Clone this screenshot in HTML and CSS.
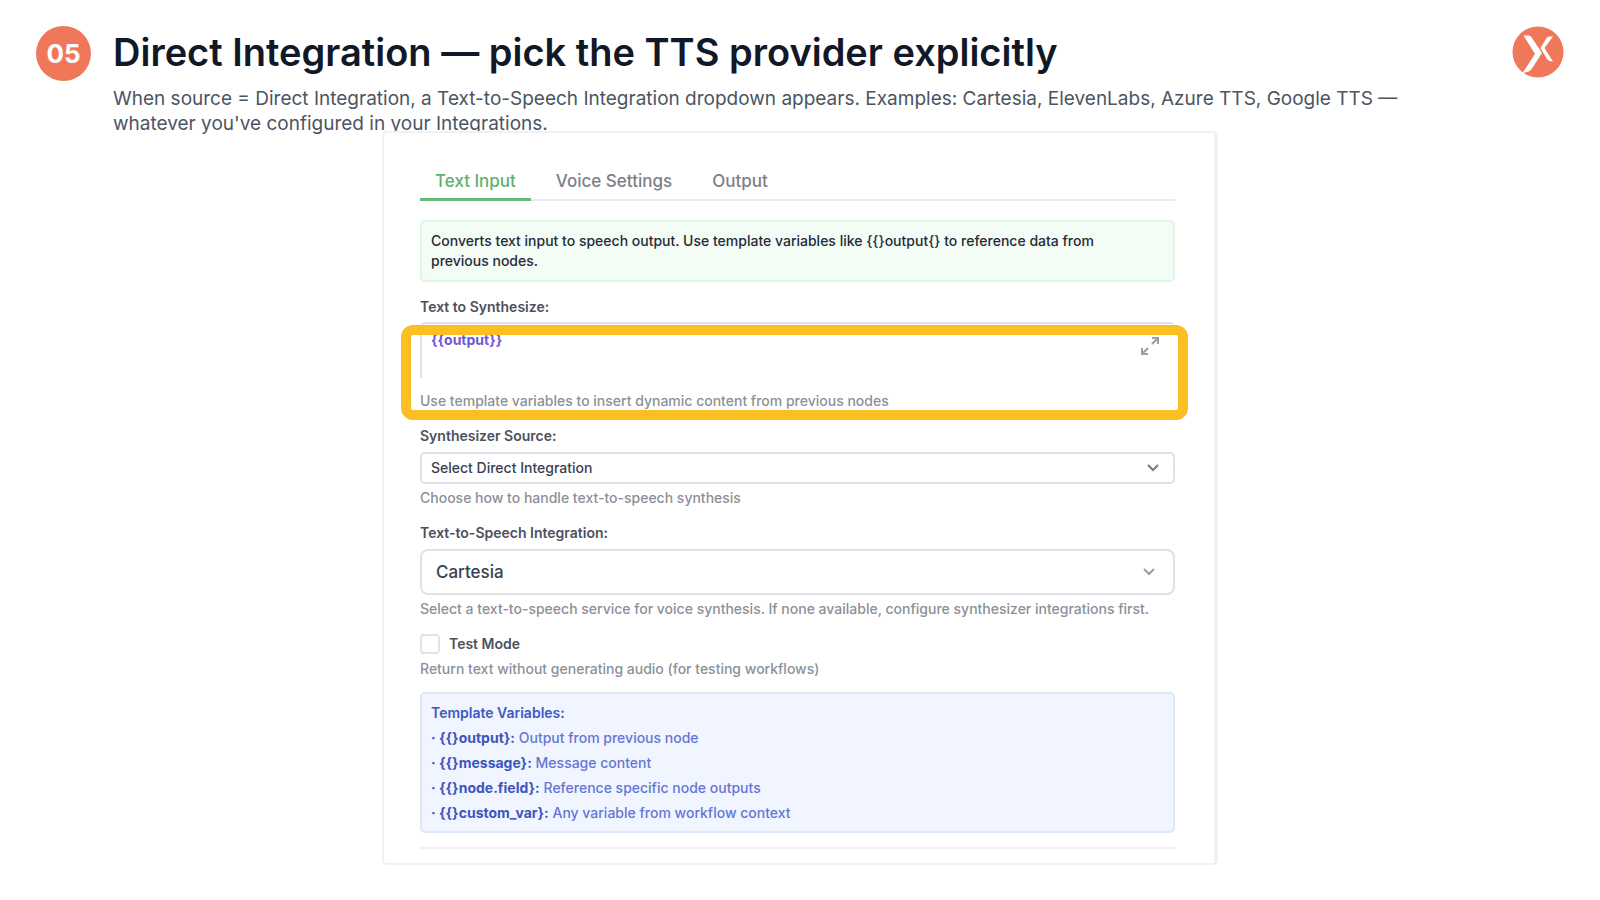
FILE: index.html
```
<!DOCTYPE html>
<html lang="en">
  <head>
    <meta charset="UTF-8" />
    <meta name="viewport" content="width=device-width, initial-scale=1.0" />
    <title>Direct Integration</title>
    <link rel="stylesheet" href="styles.css">
  </head>
  <body>
    <header class="header">
      <div class="step">05</div>
      <div class="heading">
        <h1>Direct Integration — pick the TTS provider explicitly</h1>
        <p>When source = Direct Integration, a Text-to-Speech Integration dropdown appears. Examples: Cartesia, ElevenLabs, Azure TTS, Google TTS — whatever you've configured in your Integrations.</p>
      </div>
      <svg class="logo" viewBox="0 0 52 52" aria-hidden="true">
        <circle cx="26" cy="26" r="25.500" fill="#f0785a" />
        <path d="M11.500 9.500h5q2 0 3 1.700L30 27 20 42.500q-2 3.500-9.500 4.500L23 28z" fill="#fff" />
        <path d="M41 10.500h-3.500q-2 0-3 1.700L28.500 22l6.500 11q1.500 2.500 6 2.500L32.500 22z" fill="#fff" />
      </svg>
    </header>

    <main class="panel">
      <nav class="tabs">
        <button class="tab active">Text Input</button>
        <button class="tab">Voice Settings</button>
        <button class="tab">Output</button>
      </nav>

      <div class="info">Converts text input to speech output. Use template variables like {{}output{} to reference data from previous nodes.</div>

      <div class="field">
        <label for="text">Text to Synthesize:</label>
        <textarea id="text">{{output}}</textarea>
        <p class="hint">Use template variables to insert dynamic content from previous nodes</p>
        <svg class="expand" viewBox="0 0 18 18" aria-hidden="true">
          <path d="M11 7l6-6M11 1h6v6M7 11l-6 6M1 11v6h6" />
        </svg>
        <div class="highlight"></div>
      </div>

      <div class="field">
        <label for="source">Synthesizer Source:</label>
        <div class="select">
          <select id="source">
            <option>Select Direct Integration</option>
          </select>
          <svg viewBox="0 0 12 8" aria-hidden="true"><path d="M1 1l5 5 5-5" /></svg>
        </div>
        <p class="hint">Choose how to handle text-to-speech synthesis</p>
      </div>

      <div class="field">
        <label for="integration">Text-to-Speech Integration:</label>
        <div class="select large">
          <select id="integration">
            <option>Cartesia</option>
          </select>
          <svg viewBox="0 0 12 8" aria-hidden="true"><path d="M1 1l5 5 5-5" /></svg>
        </div>
        <p class="hint">Select a text-to-speech service for voice synthesis. If none available, configure synthesizer integrations first.</p>
      </div>

      <div class="field">
        <div class="check">
          <input type="checkbox" id="test">
          <label for="test">Test Mode</label>
        </div>
        <p class="hint">Return text without generating audio (for testing workflows)</p>
      </div>

      <div class="variables">
        <h2>Template Variables:</h2>
        <ul>
          <li><b>· {{}output}:</b> Output from previous node</li>
          <li><b>· {{}message}:</b> Message content</li>
          <li><b>· {{}node.field}:</b> Reference specific node outputs</li>
          <li><b>· {{}custom_var}:</b> Any variable from workflow context</li>
        </ul>
      </div>
      <hr>
    </main>
  </body>
</html>
```
FILE: styles.css
```
* {
  box-sizing: border-box;
}

body {
  margin: 0;
  background: #fff;
  font-family: Inter, "Liberation Sans", sans-serif;
  font-size: 14px;
  font-weight: 500;
  line-height: 20px;
  color: #374151;
}

h1,
h2,
p,
ul {
  margin: 0;
}

.header {
  display: flex;
  align-items: flex-start;
  padding: 26px 36px 0;
}

.step {
  display: flex;
  align-items: center;
  justify-content: center;
  flex: none;
  width: 55px;
  height: 55px;
  margin-right: 22px;
  border-radius: 50%;
  background: #f0785a;
  color: #fff;
  font-size: 26px;
  font-weight: 700;
}

.heading {
  flex: 1;
  padding-right: 80px;
}

h1 {
  padding-bottom: 8px;
  font-size: 38px;
  line-height: 52px;
  font-weight: 600;
  color: #111827;
}

.heading p {
  font-size: 19px;
  font-weight: 400;
  line-height: 25px;
  color: #4b5563;
}

.logo {
  flex: none;
  width: 52px;
  height: 52px;
}

.panel {
  position: relative;
  max-width: 836px;
  margin: -5px auto 0;
  padding: 31px 39px 14px 36px;
  border: 2px solid #f0f1f3;
  border-right-width: 4px;
  border-radius: 5px;
  background: #fff;
}

.tabs {
  display: flex;
  margin-bottom: 19px;
  border-bottom: 2px solid #ececef;
}

.tab {
  margin-bottom: -2px;
  padding: 7px 15px;
  border: 0;
  border-bottom: 3px solid transparent;
  background: none;
  font: 500 17px/20px Inter, "Liberation Sans", sans-serif;
  color: #7b808a;
}

.tab + .tab {
  margin-left: 10px;
}

.tab.active {
  border-bottom-color: #6ab87a;
  color: #5cb270;
}

.info {
  padding: 9px 40px 9px 9px;
  border: 2px solid #dcf8e3;
  border-radius: 5px;
  background: #f3fcf5;
  color: #252b38;
}

.field {
  position: relative;
  margin-top: 15px;
}

.field label {
  display: block;
  font-weight: 600;
  color: #4b515d;
}

textarea {
  display: block;
  width: 100%;
  height: 56px;
  margin: 5px 0 13px;
  padding: 6px 9px;
  border: 0 solid #e2e3e8;
  border-width: 2px 0 0 2px;
  border-radius: 5px 5px 0 0;
  resize: none;
  outline: none;
  font: 700 14px/20px Inter, "Liberation Sans", sans-serif;
  color: #7156d8;
}

.hint {
  color: #8b9099;
}

.expand {
  position: absolute;
  top: 40px;
  right: 16px;
  width: 18px;
  height: 18px;
  fill: none;
  stroke: #9a9ea6;
  stroke-width: 2;
}

.highlight {
  position: absolute;
  top: 28px;
  right: -13px;
  bottom: -9px;
  left: -19px;
  border: 10px solid #fbbf24;
  border-radius: 12px;
  pointer-events: none;
}

.select {
  display: flex;
  align-items: center;
  margin: 6px 0 4px;
}

select {
  flex: 1;
  height: 32px;
  padding: 0 9px;
  border: 2px solid #e0e1e6;
  border-radius: 5px;
  background: #fff;
  appearance: none;
  font: 500 14px/20px Inter, "Liberation Sans", sans-serif;
  color: #374151;
}

.select svg {
  width: 12px;
  height: 8px;
  margin: 0 16px 0 -28px;
  fill: none;
  stroke: #777c86;
  stroke-width: 2;
  pointer-events: none;
}

.large select {
  height: 46px;
  padding: 0 14px;
  border-radius: 8px;
  font-size: 17px;
}

.large svg {
  margin: 0 20px 0 -32px;
  stroke: #9a9ea6;
}

.check {
  display: flex;
  align-items: center;
  gap: 9px;
  margin-bottom: 5px;
}

.check input {
  appearance: none;
  width: 20px;
  height: 20px;
  margin: 0;
  border: 2px solid #e2e3e8;
  border-radius: 4px;
  background: #fff;
}

.variables {
  margin-top: 13px;
  padding: 6px 9px;
  border: 2px solid #dbe7fb;
  border-radius: 5px;
  background: #f0f5ff;
  line-height: 25px;
  color: #6476d4;
}

.variables h2 {
  font-size: 14px;
  font-weight: 600;
  color: #4059c4;
}

.variables ul {
  padding: 0;
  list-style: none;
}

.variables b {
  font-weight: 700;
  color: #3d55bd;
}

hr {
  height: 2px;
  margin: 14px 0 0;
  border: 0;
  background: #eef0f3;
}
```
